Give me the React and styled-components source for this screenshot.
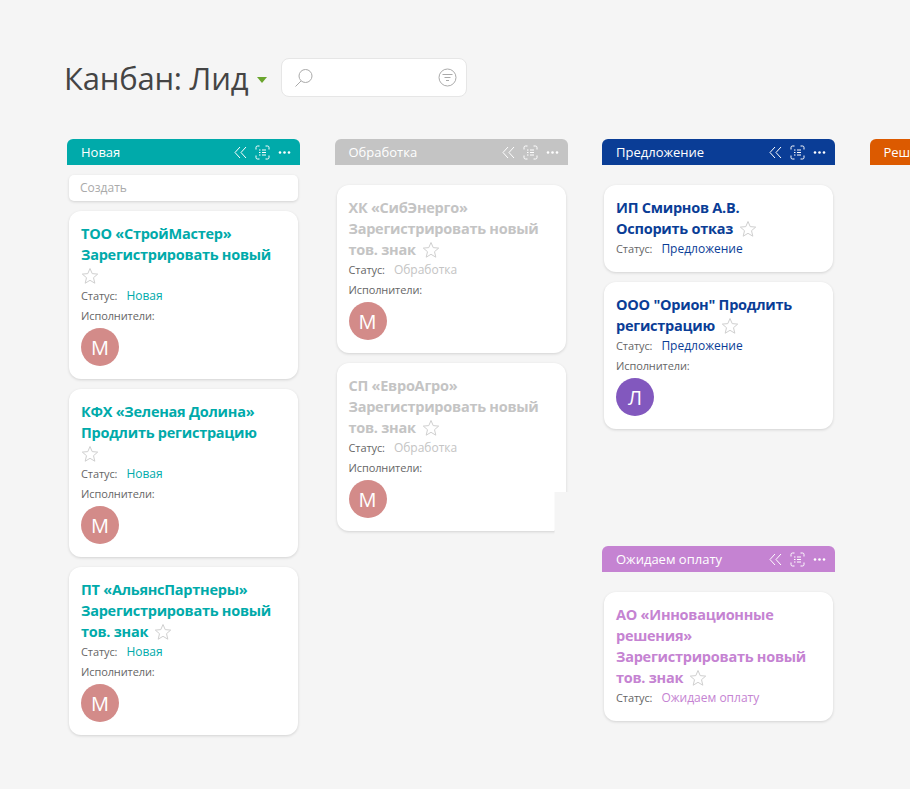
import React from 'react';
import styled, { createGlobalStyle } from 'styled-components';

const Global = createGlobalStyle`
  html, body { margin: 0; padding: 0; background: #f5f5f5; }
  body { font-family: "Open Sans", "Noto Sans", sans-serif; color: #555; }
`;

const Page = styled.div`
  width: 910px;
  height: 789px;
  overflow: hidden;
  padding: 58px 0 0 67px;
  box-sizing: border-box;
`;
const TopBar = styled.header`
  display: flex;
  align-items: center;
  height: 39px;
`;
const PageTitle = styled.h1`
  margin: 0 0 0 -3px;
  font-size: 31px;
  font-weight: 400;
  letter-spacing: -0.2px;
  color: #444;
  white-space: nowrap;
`;
const Caret = styled.span`
  width: 0;
  height: 0;
  margin: 4px 14px 0 9px;
  border-left: 5.5px solid transparent;
  border-right: 5.5px solid transparent;
  border-top: 6px solid #6aa52d;
`;
const SearchBox = styled.div`
  width: 186px;
  height: 39px;
  box-sizing: border-box;
  display: flex;
  align-items: center;
  justify-content: space-between;
  padding: 0 9px 0 12px;
  background: #fff;
  border: 1px solid #e6e6e6;
  border-radius: 8px;
`;
const Board = styled.div`
  display: grid;
  grid-template-columns: repeat(4, 233px);
  column-gap: 34.5px;
  margin-top: 42px;
  align-items: start;
`;
const Column = styled.section`
  display: flex;
  flex-direction: column;
  gap: ${p => p.$gap || 0}px;
`;
const Stage = styled.div`
  display: flex;
  flex-direction: column;
`;
const StageHeader = styled.div`
  height: 26px;
  display: flex;
  align-items: center;
  justify-content: space-between;
  padding: 0 9px 0 14px;
  background: ${p => p.$color};
  border-radius: 6px 6px 0 0;
  color: #fff;
  font-size: 13px;
  white-space: nowrap;
`;
const StageTools = styled.div`
  display: flex;
  align-items: center;
  gap: 8px;
`;
const CardList = styled.div`
  display: flex;
  flex-direction: column;
  gap: 10px;
  padding: ${p => (p.$create ? 10 : 20)}px 2px 0;
`;
const CreateButton = styled.div`
  height: 26px;
  line-height: 25px;
  padding-left: 11px;
  background: #fff;
  border-radius: 5px;
  box-shadow: 0 1px 3px rgba(0, 0, 0, 0.14);
  color: #aaa;
  font-size: 12px;
`;
const Card = styled.article`
  position: relative;
  padding: 12px 12px 13px;
  background: #fff;
  border-radius: 12px;
  box-shadow: 0 1px 3px rgba(0, 0, 0, 0.14);
  ${p => p.$cut && `
    border-bottom-right-radius: 0;
    clip-path: polygon(-4px -4px, calc(100% + 4px) -4px, calc(100% + 4px) 129px, 218px 129px, 218px calc(100% + 4px), -4px calc(100% + 4px));
  `}
`;
const CardTitle = styled.div`
  font-size: 14.5px;
  line-height: 21px;
  font-weight: 700;
  letter-spacing: -0.25px;
  color: ${p => p.$color};
`;
const TitleLine = styled.div`
  min-height: 21px;
  white-space: nowrap;
  display: flex;
  align-items: center;
  gap: 6px;
`;
const MetaRow = styled.div`
  display: flex;
  align-items: baseline;
  height: 20px;
  line-height: 20px;
  font-size: 11px;
  color: #666;
  letter-spacing: -0.1px;
`;
const StatusValue = styled.span`
  margin-left: 9px;
  font-size: 12px;
  letter-spacing: 0;
  color: ${p => p.$color};
`;
const Avatar = styled.div`
  width: 38px;
  height: 38px;
  margin-top: 2px;
  border-radius: 50%;
  background: ${p => p.$color};
  color: #fff;
  display: flex;
  align-items: center;
  justify-content: center;
  font-size: 20px;
`;

const SearchIcon = () => (
  <svg width="20" height="20" viewBox="0 0 20 20" fill="none" stroke="#aaa" strokeWidth="1">
    <circle cx="11.5" cy="8" r="6.5" />
    <path d="M7 13 L1.5 18.5" />
  </svg>
);
const FilterIcon = () => (
  <svg width="19" height="19" viewBox="0 0 19 19" fill="none" stroke="#aaa" strokeWidth="1">
    <circle cx="9.5" cy="9.5" r="8.5" />
    <path d="M4.5 6.5h10M6.5 9.5h6M8 12.5h3" />
  </svg>
);
const CollapseIcon = () => (
  <svg width="13" height="13" viewBox="0 0 13 13" fill="none" stroke="#fff" strokeWidth="1">
    <path d="M6 1 L1 6.5 L6 12M12 1 L7 6.5 L12 12" />
  </svg>
);
const FocusIcon = () => (
  <svg width="15" height="15" viewBox="0 0 15 15" fill="none" stroke="#fff" strokeWidth="1">
    <path d="M1 4.5V2.5A1.5 1.5 0 0 1 2.5 1H4.5M10.5 1H12.5A1.5 1.5 0 0 1 14 2.5V4.5M14 10.5V12.5A1.5 1.5 0 0 1 12.5 14H10.5M4.5 14H2.5A1.5 1.5 0 0 1 1 12.5V10.5" />
    <path d="M4 5H5.5M7 5H11M4 7.5H5.5M7 7.5H11M4 10H5.5M7 10H11" />
  </svg>
);
const DotsIcon = () => (
  <svg width="13" height="13" viewBox="0 0 13 13" fill="#fff">
    <circle cx="2" cy="6.5" r="1.3" />
    <circle cx="6.5" cy="6.5" r="1.3" />
    <circle cx="11" cy="6.5" r="1.3" />
  </svg>
);
const StarIcon = () => (
  <svg width="18" height="18" viewBox="0 0 18 18" fill="none" stroke="#cfcfcf" strokeWidth="1" strokeLinejoin="round">
    <path d="M9 1.5 L11.2 6.6 L16.7 7.1 L12.5 10.7 L13.8 16.2 L9 13.3 L4.2 16.2 L5.5 10.7 L1.3 7.1 L6.8 6.6 Z" />
  </svg>
);

const TEAL = '#00aaaa';
const GRAY = '#c4c4c4';
const BLUE = '#0a3d96';
const PURPLE = '#c583d2';
const ROSE = '#d38b89';
const VIOLET = '#8258be';

const columns = [
  {
    stages: [{
      name: 'Новая', color: TEAL, create: true,
      cards: [
        { title: ['ТОО «СтройМастер»', 'Зарегистрировать новый', ''], who: 'М' },
        { title: ['КФХ «Зеленая Долина»', 'Продлить регистрацию', ''], who: 'М' },
        { title: ['ПТ «АльянсПартнеры»', 'Зарегистрировать новый', 'тов. знак'], who: 'М' },
      ],
    }],
  },
  {
    stages: [{
      name: 'Обработка', color: GRAY,
      cards: [
        { title: ['ХК «СибЭнерго»', 'Зарегистрировать новый', 'тов. знак'], who: 'М' },
        { title: ['СП «ЕвроАгро»', 'Зарегистрировать новый', 'тов. знак'], who: 'М', cut: true },
      ],
    }],
  },
  {
    gap: 117,
    stages: [
      {
        name: 'Предложение', color: BLUE,
        cards: [
          { title: ['ИП Смирнов А.В.', 'Оспорить отказ'] },
          { title: ['ООО "Орион" Продлить', 'регистрацию'], who: 'Л', avatar: VIOLET },
        ],
      },
      {
        name: 'Ожидаем оплату', color: PURPLE,
        cards: [
          { title: ['АО «Инновационные', 'решения»', 'Зарегистрировать новый', 'тов. знак'] },
        ],
      },
    ],
  },
  { stages: [{ name: 'Решение', color: '#dc5a00', cards: [] }] },
];

const KanbanCard = ({ card, stage }) => (
  <Card $cut={card.cut}>
    <CardTitle $color={stage.color}>
      {card.title.map((line, i) => (
        <TitleLine key={i}>
          {line && <span>{line}</span>}
          {i === card.title.length - 1 && <StarIcon />}
        </TitleLine>
      ))}
    </CardTitle>
    <MetaRow>
      Статус:
      <StatusValue $color={stage.color}>{stage.name}</StatusValue>
    </MetaRow>
    {card.who && (
      <>
        <MetaRow>Исполнители:</MetaRow>
        <Avatar $color={card.avatar || ROSE}>{card.who}</Avatar>
      </>
    )}
  </Card>
);

export default function App() {
  return (
    <Page>
      <Global />
      <TopBar>
        <PageTitle>Канбан: Лид</PageTitle>
        <Caret />
        <SearchBox>
          <SearchIcon />
          <FilterIcon />
        </SearchBox>
      </TopBar>
      <Board>
        {columns.map((col, c) => (
          <Column key={c} $gap={col.gap}>
            {col.stages.map(stage => (
              <Stage key={stage.name}>
                <StageHeader $color={stage.color}>
                  {stage.name}
                  <StageTools>
                    <CollapseIcon />
                    <FocusIcon />
                    <DotsIcon />
                  </StageTools>
                </StageHeader>
                <CardList $create={stage.create}>
                  {stage.create && <CreateButton>Создать</CreateButton>}
                  {stage.cards.map((card, i) => (
                    <KanbanCard key={i} card={card} stage={stage} />
                  ))}
                </CardList>
              </Stage>
            ))}
          </Column>
        ))}
      </Board>
    </Page>
  );
}
